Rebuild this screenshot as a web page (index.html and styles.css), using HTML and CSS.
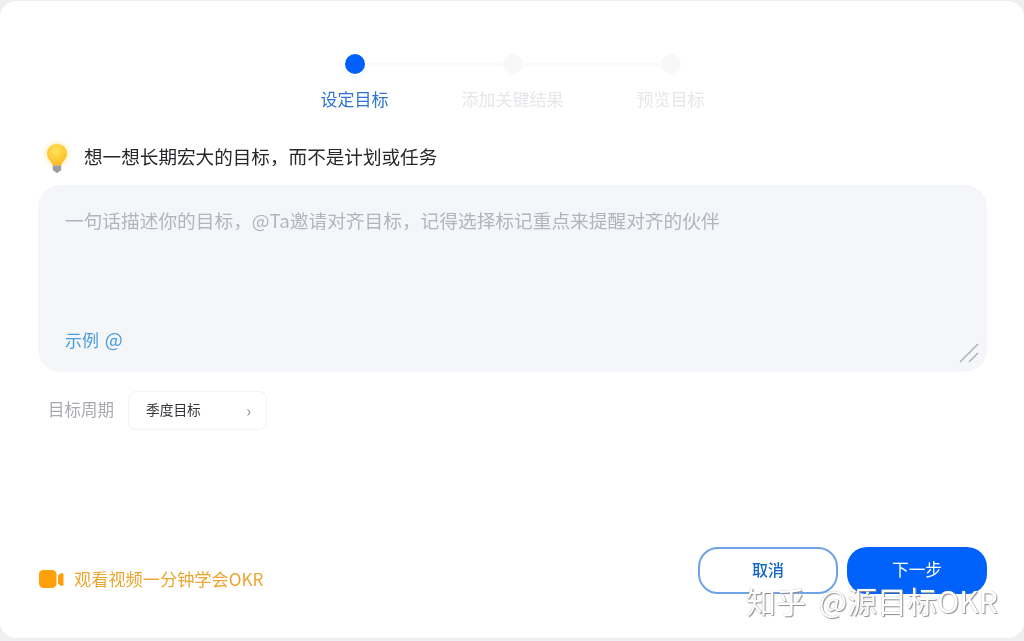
FILE: index.html
```html
<!DOCTYPE html>
<html lang="zh-CN">
<head>
<meta charset="utf-8">
<title>设定目标</title>
<link rel="stylesheet" href="styles.css">
</head>
<body>
<main class="dialog">
  <ol class="steps">
    <li class="step step-active"><span class="dot"></span><span class="step-label">设定目标</span></li>
    <li class="step"><span class="dot"></span><span class="step-label">添加关键结果</span></li>
    <li class="step"><span class="dot"></span><span class="step-label">预览目标</span></li>
  </ol>
  <div class="hint">
    <svg class="bulb" viewBox="0 0 32 40" aria-hidden="true">
      <defs>
        <radialGradient id="glass" cx="45%" cy="32%" r="70%">
          <stop offset="0" stop-color="#ffe25c"/>
          <stop offset="1" stop-color="#fbbb20"/>
        </radialGradient>
        <radialGradient id="glow" cx="50%" cy="50%" r="50%">
          <stop offset=".55" stop-color="#ffe9a6" stop-opacity=".7"/>
          <stop offset="1" stop-color="#fff5d8" stop-opacity="0"/>
        </radialGradient>
      </defs>
      <circle cx="16" cy="16" r="16" fill="url(#glow)"/>
      <path d="M16 6C10.200 6 6 10.400 6 15.800c0 3 1.400 4.800 2.900 6.600 1.300 1.600 2.300 3 2.700 5h8.800c.4-2 1.400-3.400 2.700-5 1.500-1.800 2.900-3.600 2.900-6.600C26 10.400 21.800 6 16 6z" fill="url(#glass)"/>
      <path d="M11.800 27.400h8.400v4.200c0 .9-.7 1.600-1.600 1.600h-5.200c-.9 0-1.600-.7-1.600-1.600z" fill="#9a9ca1"/>
      <path d="M14 33.200h4l-.8 1.300h-2.400z" fill="#6f7176"/>
    </svg>
    <h1 class="hint-text">想一想长期宏大的目标&#xFF0C;而不是计划或任务</h1>
  </div>
  <section class="input-box">
    <p class="placeholder">一句话描述你的目标&#xFF0C;@Ta邀请对齐目标&#xFF0C;记得选择标记重点来提醒对齐的伙伴</p>
    <p class="example">示例 <span class="at">@</span></p>
    <svg class="resize" viewBox="0 0 20 20" aria-hidden="true">
      <path d="M1 19 19 1M10 19l9-9" stroke="#a9abb3" stroke-width="1.300" fill="none"/>
    </svg>
  </section>
  <div class="period">
    <span class="period-label">目标周期</span>
    <div class="select"><span class="select-value">季度目标</span><span class="chevron">›</span></div>
  </div>
  <footer class="footer">
    <a class="video-link">
      <svg class="video-icon" viewBox="0 0 25 18" aria-hidden="true">
        <rect x="0" y="0" width="17.500" height="18" rx="4.500" fill="#ff9f0a"/>
        <path d="M19 6.200c0-.7.300-1.200.9-1.600l2.300-1.300c1-.6 2.300.1 2.300 1.300v9.800c0 1.200-1.300 1.900-2.300 1.300l-2.300-1.300c-.6-.4-.9-.9-.9-1.600z" fill="#ff9f0a"/>
      </svg>
      <span>观看视频一分钟学会OKR</span>
    </a>
    <div class="actions">
      <button class="btn btn-ghost">取消</button>
      <button class="btn btn-primary">下一步</button>
    </div>
  </footer>
  <div class="watermark">知乎 @源目标OKR</div>
</main>
</body>
</html>
```
FILE: styles.css
```css
* { box-sizing: border-box; }
html, body { height: 100%; }
body {
  margin: 0;
  background: #efeff1;
  font-family: "Noto Sans CJK SC", "Noto Sans", sans-serif;
  overflow: hidden;
}
.dialog {
  position: relative;
  height: 637px;
  margin-top: 1px;
  padding: 53px 37px 0 38px;
  background: #fff;
  border-radius: 16px;
  display: flex;
  flex-direction: column;
  filter: blur(0.4px);
}
.steps {
  list-style: none;
  margin: 0;
  padding: 0;
  display: flex;
  justify-content: center;
}
.step {
  position: relative;
  width: 158px;
  display: flex;
  flex-direction: column;
  align-items: center;
}
.step:not(:last-child)::after {
  content: "";
  position: absolute;
  left: 50%;
  top: 9px;
  width: 158px;
  height: 3px;
  background: #f9fafb;
}
.dot {
  position: relative;
  z-index: 1;
  width: 20px;
  height: 20px;
  border-radius: 50%;
  background: #f7f8fa;
}
.step-active .dot {
  background: #0060fb;
  box-shadow: 0 0 0 2px #fff, 0 3px 6px rgba(0, 96, 251, .08);
}
.step-label {
  margin-top: 12px;
  font-size: 17px;
  line-height: 25px;
  color: #e6e7ea;
  white-space: nowrap;
}
.step-active .step-label { color: #2f74d0; }
.hint {
  display: flex;
  align-items: center;
  margin-top: 26px;
  height: 42px;
}
.bulb {
  width: 32px;
  height: 40px;
  margin-right: 11px;
  margin-left: 3px;
  flex: none;
}
.hint-text {
  margin: 0 0 4px;
  font-size: 18.600px;
  font-weight: 400;
  color: #26272b;
  line-height: 28px;
  white-space: nowrap;
}
.input-box {
  position: relative;
  margin-top: 6px;
  height: 187px;
  background: #f4f6fa;
  border-radius: 22px;
  padding: 20px 27px 20px;
  display: flex;
  flex-direction: column;
  justify-content: space-between;
}
.placeholder {
  margin: 0;
  font-size: 18.700px;
  line-height: 30px;
  color: #b2b5be;
  white-space: nowrap;
}
.example {
  margin: 0;
  font-size: 17px;
  line-height: 24px;
  color: #4a9ddc;
  word-spacing: 2px;
}
.at { font-size: 19px; }
.resize {
  position: absolute;
  right: 8px;
  bottom: 9px;
  width: 20px;
  height: 20px;
}
.period {
  display: flex;
  align-items: center;
  margin-top: 19px;
  padding-left: 10px;
}
.period-label {
  font-size: 16.500px;
  line-height: 24px;
  color: #a7a9af;
  width: 80px;
  margin-bottom: 3px;
}
.select {
  width: 139px;
  height: 39px;
  border: 1px solid #f2f3f5;
  border-radius: 8px;
  background: #fff;
  padding: 0 15px 0 17px;
  display: flex;
  align-items: center;
  justify-content: space-between;
  font-size: 13.700px;
  color: #33343a;
}
.select-value { margin-bottom: 3px; }
.chevron { color: #8b8d93; font-size: 16px; margin-bottom: 2px; }
.footer {
  margin-top: auto;
  margin-bottom: 44px;
  display: flex;
  align-items: flex-end;
  justify-content: space-between;
}
.video-link {
  display: flex;
  align-items: center;
  gap: 10px;
  font-size: 17.200px;
  line-height: 25px;
  color: #eba631;
  margin-left: 1px;
  margin-bottom: 3px;
}
.video-icon { width: 25px; height: 18px; margin-top: 1px; }
.actions { display: flex; gap: 9px; }
.btn {
  width: 140px;
  height: 47px;
  border-radius: 20px;
  font-family: inherit;
  font-size: 16px;
  padding: 0 0 3px;
}
.btn-ghost {
  background: #fff;
  border: 2px solid #6ea3e8;
  color: #1767c8;
  font-weight: 500;
}
.btn-primary {
  background: #0062fb;
  border: 0;
  color: #fff;
  font-size: 16.700px;
}
.watermark {
  position: absolute;
  left: 746px;
  top: 578px;
  font-size: 30px;
  line-height: 42px;
  word-spacing: 6px;
  color: #fff;
  text-shadow: 1px 1px 1px #8f8f8f, 0 0 1px #a0a0a0;
  white-space: nowrap;
}
```
